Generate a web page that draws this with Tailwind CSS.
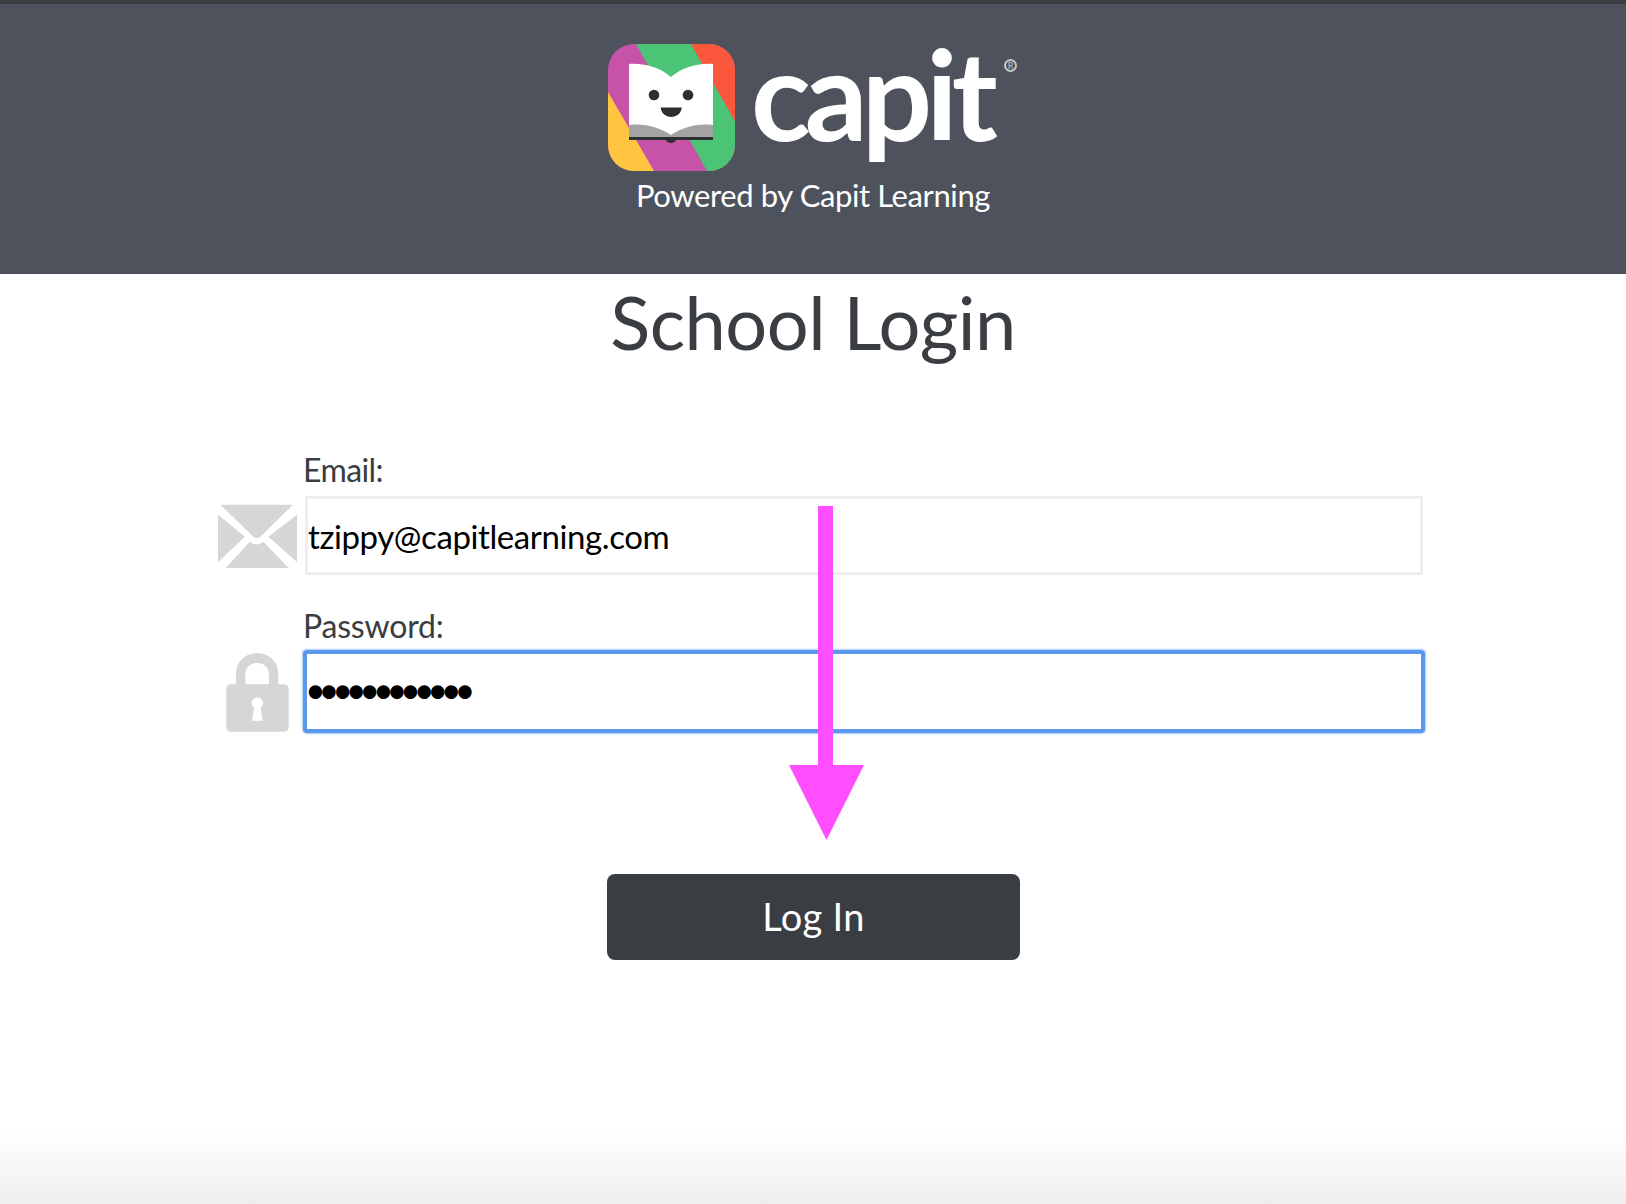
<!doctype html>
<html lang="en">
<head>
<meta charset="utf-8">
<title>School Login</title>
<script src="https://cdn.jsdelivr.net/npm/@tailwindcss/browser@4"></script>
</head>
<body class="bg-white font-['Lato',sans-serif]">
<div class="relative h-[1204px] w-[1626px] overflow-hidden bg-gradient-to-b from-white from-[94%] to-[#eeeeee]">
  <header class="flex h-[274px] flex-col items-center border-t-4 border-[#3a3d42] bg-[#4e525c] pt-[40px]">
    <div class="flex h-[127px] w-[410px] items-start">
      <svg class="h-[127px] w-[127px] shrink-0" viewBox="0 0 127 127">
        <defs><clipPath id="r"><rect width="127" height="127" rx="26"/></clipPath></defs>
        <g clip-path="url(#r)">
          <rect width="127" height="127" fill="#c653a8"/>
          <path d="M28 0H83L127 77V127H99Z" fill="#4cc476"/>
          <path d="M83 0H127V77Z" fill="#fb573d"/>
          <path d="M0 48L46 127H0Z" fill="#ffc540"/>
        </g>
        <path d="M21 20C38 19 52 24 63 33C74 24 88 19 105 20V92H21Z" fill="#ffffff"/>
        <path d="M21 81C38 79 52 84 63 91C74 84 88 79 105 81V93H21Z" fill="#a3a3a3"/>
        <rect x="21" y="93" width="84" height="3" fill="#2e2e33"/>
        <path d="M58 96H68C67 100 59 100 58 96Z" fill="#2e2e33"/>
        <circle cx="46" cy="51" r="5.3" fill="#2e2e33"/>
        <circle cx="80" cy="51" r="5.3" fill="#2e2e33"/>
        <path d="M52.7 63.5H73.7C73 76 53.5 76 52.7 63.5Z" fill="#2e2e33"/>
      </svg>
      <div class="relative ml-[16px] text-[124px] leading-[98px] font-bold tracking-[-6px] text-white">capit<span class="absolute left-[253px] top-[15px] flex h-[13px] w-[13px] items-center justify-center rounded-full border-2 border-[#c4c6ca] text-[9px] leading-none font-normal tracking-normal text-[#c4c6ca]">R</span></div>
    </div>
    <p class="mt-[5px] text-[31px] leading-[38px] tracking-[-0.4px] text-white">Powered by Capit Learning</p>
  </header>

  <h1 class="mt-[4px] text-center text-[74px] leading-[88px] font-normal tracking-[-0.5px] text-[#3a3d42]">School Login</h1>

  <form class="mt-[84px] flex flex-col pl-[218px]">
    <label class="ml-[85px] text-[32px] leading-[40px] tracking-[-0.6px] text-[#3a3d42]" for="email">Email:</label>
    <div class="mt-[6px] flex items-center">
      <svg class="h-[64px] w-[79px]" viewBox="0 0 235 190" fill="#d6d6d6">
        <path d="M7 2H223L128 95Q116 108 103 95Z"/>
        <path d="M0 32L80 97L0 172Z"/>
        <path d="M235 32V172L150 97Z"/>
        <path d="M23 190L95 112Q115 128 135 112L210 190Z"/>
      </svg>
      <input id="email" type="text" value="tzippy@capitlearning.com" class="ml-[8px] h-[79px] w-[1118px] border-[3px] border-[#eeeeee] bg-white px-0 text-[33px] tracking-[-0.4px] text-black outline-none">
    </div>
    <label class="mt-[31px] ml-[85px] text-[32px] leading-[40px] tracking-[-0.2px] text-[#3a3d42]" for="password">Password:</label>
    <div class="mt-[4px] flex items-center">
      <svg class="mt-[2px] ml-[8px] h-[79px] w-[63px]" viewBox="0 0 189 236" fill="#d6d6d6">
        <path d="M30 100V63C30 -21 157 -21 157 63V100H129V63C129 18 58 18 58 63V100Z"/>
        <path d="M16 93H173Q188 93 188 108V221Q188 236 173 236H16Q1 236 1 221V108Q1 93 16 93ZM94 133C78 133 70 153 84 163L78 203H110L104 163C118 153 110 133 94 133Z" fill-rule="evenodd"/>
      </svg>
      <input id="password" type="password" value="abcdefghijkl" class="ml-[14px] h-[83px] w-[1122px] rounded-[4px] border-[4px] border-[#5c97ee] bg-white px-0 pb-[6px] indent-[-2px] text-[36px] tracking-[-7.3px] text-black shadow-[0_0_2px_1px_#a9ccf8] outline-none">
    </div>
    <button type="button" class="mt-[141px] ml-[389px] h-[86px] w-[413px] rounded-[8px] bg-[#3a3d42] pb-[2px] text-[38px] tracking-[0.3px] text-white">Log In</button>
  </form>

  <svg class="absolute left-[789px] top-[506px] h-[334px] w-[75px]" viewBox="0 0 75 334" fill="#ff4dff">
    <path d="M29 0H44V259H75L37.5 334L0 259H29Z"/>
  </svg>
</div>
</body>
</html>
